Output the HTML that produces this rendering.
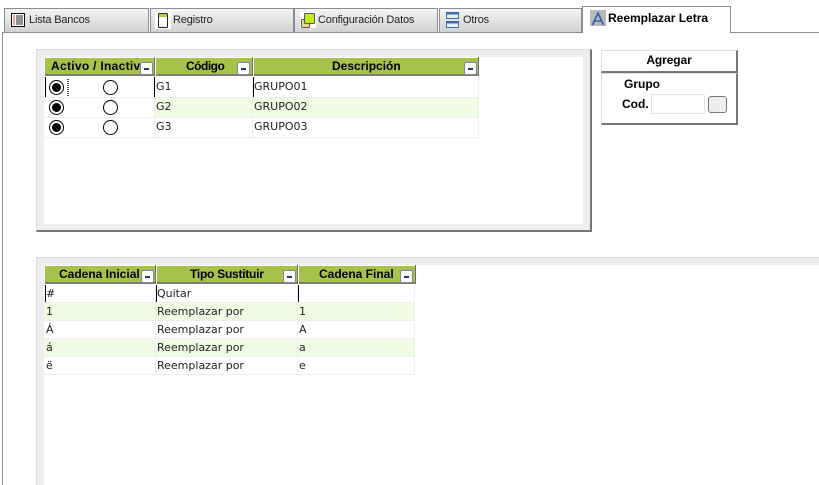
<!DOCTYPE html>
<html><head><meta charset="utf-8">
<style>
html,body{margin:0;padding:0;background:#fff}
body{width:819px;height:485px;position:relative;overflow:hidden;font-family:"Liberation Sans",sans-serif;color:#000}
div,svg{position:absolute;box-sizing:border-box}
.tab{top:8px;height:25px;border:1px solid #8b8b95;border-bottom:none;background:linear-gradient(#f4f4f4,#d0d0d0);font-size:11px;letter-spacing:-.18px;line-height:23px;white-space:nowrap;color:#222}
.tab span{position:absolute;top:0}
.t{white-space:nowrap}
.h{background:#a5c34b;font:bold 12px/16px "Liberation Sans",sans-serif;text-align:left;white-space:nowrap;overflow:hidden;border-bottom:2px solid #7c7c7c;color:#000}
.sep{background:#6c6c6c;width:2px}
.btn{width:13px;height:13px;background:#fff;border:1px solid #888;border-radius:2px}
.btn:after{content:"";position:absolute;left:3px;top:5px;width:5px;height:2px;background:#223a80}
.c{font:11px/16px "DejaVu Sans",sans-serif;white-space:nowrap;color:#222}
.g{background:#effbe2}
.l{background:#eeeeee}
.rad{width:15px;height:15px;border:1px solid #000;border-radius:50%;background:#fff}
.rad.on:after{content:"";position:absolute;left:2px;top:2px;width:9px;height:9px;border-radius:50%;background:#000}
.cur{width:1px;background:#000}
</style></head><body>

<!-- tab strip -->
<div class="tab" style="left:4px;width:145px"><span style="left:24px">Lista Bancos</span></div>
<div class="tab" style="left:150px;width:144px"><span style="left:22px">Registro</span></div>
<div class="tab" style="left:294px;width:144px"><span style="left:23px">Configuración Datos</span></div>
<div class="tab" style="left:439px;width:143px"><span style="left:23px">Otros</span></div>
<div style="left:2px;top:32px;width:580px;height:1px;background:#8b8b95"></div>
<div style="left:730px;top:32px;width:89px;height:1px;background:#8b8b95"></div>
<div style="left:2px;top:32px;width:1px;height:453px;background:#8f8f99"></div>
<div style="left:582px;top:6px;width:149px;height:27px;border:1px solid #8b8b95;border-bottom:none;background:#fff"></div>
<div class="t" style="left:608px;top:10px;font:bold 12px/16px 'Liberation Sans',sans-serif">Reemplazar Letra</div>

<!-- tab icons -->
<svg style="left:10px;top:12px" width="16" height="16" viewBox="0 0 16 16"><rect x="1.5" y="1.5" width="13" height="13" fill="#fff" stroke="#111"/><path d="M6 4h7M6 6h7M6 8h7M6 10h7M6 12h7" stroke="#222"/><path d="M3 4h2M3 6h2M3 8h2M3 10h2M3 12h2" stroke="#d33"/></svg>
<svg style="left:155px;top:12px" width="16" height="17" viewBox="0 0 16 17"><rect x="0" y="0" width="16" height="17" fill="#fff"/><rect x="3.5" y="1.5" width="9" height="14" rx="1" fill="#fff" stroke="#222"/><rect x="4" y="2" width="8" height="3" fill="#b8c840"/></svg>
<svg style="left:300px;top:12px" width="16" height="16" viewBox="0 0 16 16"><rect width="16" height="16" fill="#fff"/><rect x="1.5" y="7.5" width="8" height="8" rx="1" fill="#e8d890" stroke="#555"/><rect x="4.5" y="1.5" width="10" height="10" rx="1" fill="#c0ee10" stroke="#556"/></svg>
<svg style="left:446px;top:12px" width="14" height="16" viewBox="0 0 14 16"><rect x=".5" y=".5" width="12" height="6" fill="#e8eef8" stroke="#3a6ea8"/><rect x=".5" y="9.5" width="12" height="6" fill="#e8eef8" stroke="#3a6ea8"/><rect x="1" y="1" width="11" height="1.5" fill="#3a6ea8"/><rect x="1" y="10" width="11" height="1.5" fill="#3a6ea8"/></svg>
<svg style="left:590px;top:10px" width="16" height="16" viewBox="0 0 16 16"><rect width="16" height="16" fill="#b9b9b9"/><path d="M2.5 15L8 3l5.5 12M4.5 11h7" fill="none" stroke="#2f62b0" stroke-width="1.6"/></svg>

<!-- panel 1 -->
<div class="l" style="left:36px;top:49px;width:556px;height:183px;border-top:1px solid #ddd;border-left:1px solid #ddd;border-right:2px solid #777;border-bottom:2px solid #777"></div>
<div style="left:44px;top:57px;width:539px;height:167px;background:#fff"></div>

<div class="h" style="left:45px;top:58px;width:110px;height:18px;padding-left:6px;letter-spacing:.3px">Activo / Inactiv</div>
<div class="h" style="left:156px;top:58px;width:97px;height:18px;padding-left:30px;letter-spacing:-.5px">Código</div>
<div class="h" style="left:254px;top:58px;width:225px;height:18px;padding-left:78px">Descripción</div>
<div class="sep" style="left:154px;top:57px;height:19px;width:1px"></div>
<div class="sep" style="left:252px;top:57px;height:19px;width:1px"></div>
<div class="sep" style="left:478px;top:57px;height:19px;width:1px"></div>
<div class="btn" style="left:140px;top:62px"></div>
<div class="btn" style="left:237px;top:62px"></div>
<div class="btn" style="left:464px;top:62px"></div>

<div style="left:155px;top:97px;width:324px;height:20px" class="g"></div>
<div style="left:44px;top:97px;width:435px;height:1px;background:#eee"></div>
<div style="left:44px;top:117px;width:435px;height:1px;background:#eee"></div>
<div style="left:44px;top:137px;width:435px;height:1px;background:#eee"></div>
<div style="left:154px;top:77px;width:1px;height:61px;background:#eee"></div>
<div style="left:252px;top:77px;width:1px;height:61px;background:#eee"></div>
<div style="left:478px;top:77px;width:1px;height:61px;background:#eee"></div>
<div class="cur" style="left:45px;top:77px;height:20px"></div>
<div class="cur" style="left:154px;top:77px;height:20px"></div>
<div class="cur" style="left:253px;top:77px;height:20px"></div>
<div style="left:67px;top:79px;width:2px;height:17px;background:repeating-linear-gradient(#555 0 1px,#fff 1px 2px)"></div>

<div class="rad on" style="left:49px;top:80px"></div><div class="rad" style="left:103px;top:80px"></div>
<div class="rad on" style="left:49px;top:100px"></div><div class="rad" style="left:103px;top:100px"></div>
<div class="rad on" style="left:49px;top:120px"></div><div class="rad" style="left:103px;top:120px"></div>

<div class="c" style="left:156px;top:79px">G1</div><div class="c" style="left:254px;top:79px">GRUPO01</div>
<div class="c" style="left:156px;top:99px">G2</div><div class="c" style="left:254px;top:99px">GRUPO02</div>
<div class="c" style="left:156px;top:119px">G3</div><div class="c" style="left:254px;top:119px">GRUPO03</div>

<!-- right side -->
<div style="left:601px;top:50px;width:137px;height:23px;background:#fff;border-top:1px solid #ddd;border-left:1px solid #ddd;border-right:2px solid #777;border-bottom:2px solid #777;font:bold 12px/18px 'Liberation Sans',sans-serif;text-align:center;letter-spacing:-.1px">Agregar</div>
<div style="left:601px;top:73px;width:137px;height:52px;background:#fff;border-top:1px solid #ddd;border-left:1px solid #ddd;border-right:2px solid #777;border-bottom:2px solid #777"></div>
<div class="t" style="left:624px;top:76px;font:bold 12px/16px 'Liberation Sans',sans-serif">Grupo</div>
<div class="t" style="left:622px;top:96px;font:bold 12px/16px 'Liberation Sans',sans-serif">Cod.</div>
<div style="left:651px;top:94px;width:54px;height:20px;border:1px solid #e3e3ee;border-radius:2px;background:#fff"></div>
<div style="left:708px;top:96px;width:19px;height:17px;border:1px solid #777;border-radius:3px;background:#eeeeee"></div>

<!-- panel 2 -->
<div class="l" style="left:36px;top:257px;width:783px;height:228px;border-top:1px solid #ddd;border-left:1px solid #ddd"></div>
<div style="left:44px;top:265px;width:775px;height:220px;background:#fff"></div>

<div class="h" style="left:45px;top:266px;width:110px;height:18px;padding-left:14px">Cadena Inicial</div>
<div class="h" style="left:157px;top:266px;width:140px;height:18px;padding-left:33px;letter-spacing:-.25px">Tipo Sustituir</div>
<div class="h" style="left:299px;top:266px;width:116px;height:18px;padding-left:20px">Cadena Final</div>
<div class="sep" style="left:155px;top:265px;height:19px;width:1px"></div>
<div class="sep" style="left:297px;top:265px;height:19px;width:1px"></div>
<div class="sep" style="left:415px;top:265px;height:19px;width:1px"></div>
<div class="btn" style="left:141px;top:270px"></div>
<div class="btn" style="left:283px;top:270px"></div>
<div class="btn" style="left:400px;top:270px"></div>

<div class="g" style="left:44px;top:303px;width:371px;height:17px"></div>
<div class="g" style="left:44px;top:339px;width:371px;height:17px"></div>
<div style="left:44px;top:302px;width:371px;height:1px;background:#eee"></div>
<div style="left:44px;top:320px;width:371px;height:1px;background:#eee"></div>
<div style="left:44px;top:338px;width:371px;height:1px;background:#eee"></div>
<div style="left:44px;top:356px;width:371px;height:1px;background:#eee"></div>
<div style="left:44px;top:374px;width:371px;height:1px;background:#eee"></div>
<div style="left:155px;top:285px;width:1px;height:90px;background:#eee"></div>
<div style="left:297px;top:285px;width:1px;height:90px;background:#eee"></div>
<div style="left:414px;top:285px;width:1px;height:90px;background:#eee"></div>
<div class="cur" style="left:45px;top:285px;height:17px"></div>
<div class="cur" style="left:156px;top:285px;height:17px"></div>
<div class="cur" style="left:298px;top:285px;height:17px"></div>

<div class="c" style="left:46px;top:286px">#</div><div class="c" style="left:157px;top:286px">Quitar</div>
<div class="c" style="left:46px;top:304px">1</div><div class="c" style="left:157px;top:304px">Reemplazar por</div><div class="c" style="left:299px;top:304px">1</div>
<div class="c" style="left:46px;top:322px">Á</div><div class="c" style="left:157px;top:322px">Reemplazar por</div><div class="c" style="left:299px;top:322px">A</div>
<div class="c" style="left:46px;top:340px">á</div><div class="c" style="left:157px;top:340px">Reemplazar por</div><div class="c" style="left:299px;top:340px">a</div>
<div class="c" style="left:46px;top:358px">ë</div><div class="c" style="left:157px;top:358px">Reemplazar por</div><div class="c" style="left:299px;top:358px">e</div>

</body></html>
